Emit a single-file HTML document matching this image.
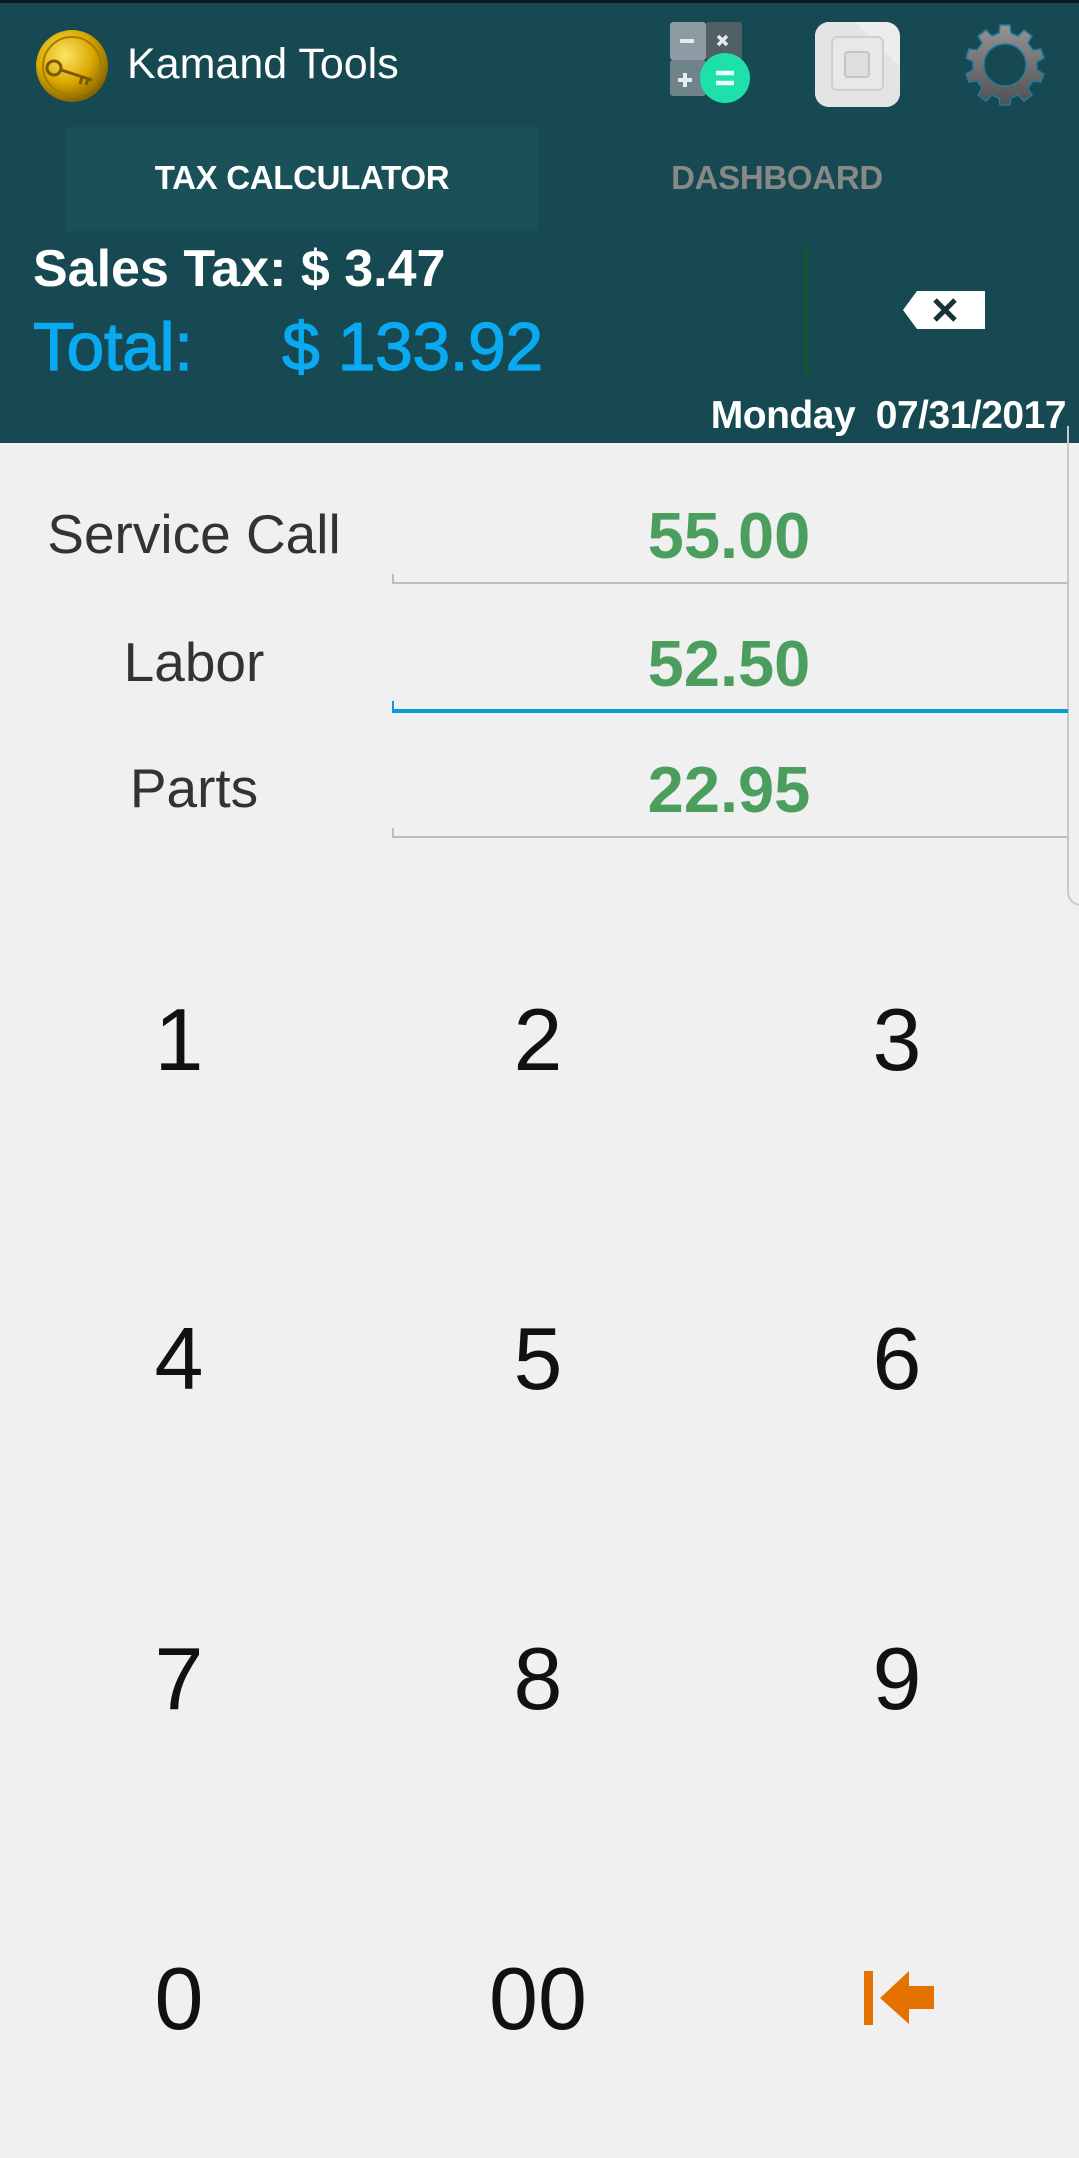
<!DOCTYPE html>
<html><head><meta charset="utf-8"><style>
*{margin:0;padding:0;box-sizing:border-box}
body{width:1079px;height:2158px;background:#f0f0f0;font-family:"Liberation Sans",sans-serif;position:relative;overflow:hidden}
.a{position:absolute;white-space:nowrap}
#hdr{position:absolute;left:0;top:0;width:1079px;height:443px;background:#164951;border-top:3px solid #0a1a1e}
.lab{font-size:55px;color:#333;transform:translateX(-50%)}
.val{font-size:65px;color:#4c9e5f;font-weight:bold;transform:translateX(-50%)}
.k{font-size:88px;color:#111;transform:translate(-50%,-50%)}
.ln{position:absolute;left:392px;width:676px;height:2px;background:#bdbdbd}
.tk{position:absolute;left:392px;width:2px;height:10px;background:#bdbdbd}
</style></head><body>
<div id="hdr"></div>
<svg class="a" style="left:34px;top:28px" width="76" height="76" viewBox="0 0 76 76">
<defs><radialGradient id="g" cx="40%" cy="35%" r="65%"><stop offset="0" stop-color="#ffe566"/><stop offset=".6" stop-color="#d9a800"/><stop offset="1" stop-color="#8a6500"/></radialGradient></defs>
<circle cx="38" cy="38" r="36" fill="url(#g)"/><circle cx="38" cy="38" r="29" fill="none" stroke="#a57c00" stroke-width="2"/>
<circle cx="20" cy="40" r="7" fill="none" stroke="#7a5a00" stroke-width="3"/><path d="M27 42 L58 52 M48 49 l-2 7 M54 51 l-2 6" stroke="#7a5a00" stroke-width="3" fill="none"/>
</svg>
<div class="a" style="left:127px;top:40px;font-size:43px;color:#fff">Kamand Tools</div>
<svg class="a" style="left:668px;top:20px" width="86" height="90" viewBox="0 0 86 90">
<rect x="2" y="2" width="36" height="38" rx="3" fill="#8c9ca2"/><rect x="38" y="2" width="36" height="38" rx="3" fill="#4f6167"/><rect x="2" y="40" width="36" height="36" rx="3" fill="#71838a"/>
<path d="M12 21h14" stroke="#e6eaeb" stroke-width="4"/><path d="M50 16l9 9M59 16l-9 9" stroke="#e6eaeb" stroke-width="3.5"/><path d="M10 60h14M17 53v14" stroke="#e6eaeb" stroke-width="4"/>
<circle cx="57" cy="58" r="25" fill="#1fe0ab"/><path d="M48 53h18M48 63h18" stroke="#eafff7" stroke-width="4.5"/>
</svg>
<svg class="a" style="left:815px;top:22px" width="85" height="85" viewBox="0 0 85 85">
<rect x="0" y="0" width="85" height="85" rx="14" fill="#ededed"/><path d="M0 14 A14 14 0 0 1 14 0 L40 0 L85 45 L85 71 A14 14 0 0 1 71 85 L14 85 A14 14 0 0 1 0 71Z" fill="#e4e4e4"/>
<rect x="17" y="15" width="51" height="53" rx="5" fill="#e8e8e8" stroke="#cfcfcf" stroke-width="2"/><rect x="30" y="30" width="24" height="25" rx="3" fill="#dedede" stroke="#c4c4c4" stroke-width="2"/>
</svg>
<svg class="a" style="left:963px;top:23px" width="84" height="84" viewBox="-42 -42 84 84">
<defs><linearGradient id="gg" x1="0" y1="0" x2="0" y2="1"><stop offset="0" stop-color="#959595"/><stop offset="1" stop-color="#505050"/></linearGradient></defs>
<g fill="url(#gg)" stroke="#1f7aa0" stroke-width="1.5">
<path d="M-5 -40 L5 -40 L6 -32 L13 -29 L19 -35 L27 -29 L23 -22 L28 -15 L36 -16 L39 -7 L32 -3 L32 5 L39 9 L36 17 L28 16 L23 23 L27 30 L19 36 L13 30 L6 33 L5 40 L-5 40 L-6 33 L-13 30 L-19 36 L-27 30 L-23 23 L-28 16 L-36 17 L-39 9 L-32 5 L-32 -3 L-39 -7 L-36 -16 L-28 -15 L-23 -22 L-27 -29 L-19 -35 L-13 -29 L-6 -32Z"/></g>
<circle r="21" fill="#164951" stroke="#1f7aa0" stroke-width="1.5"/>
</svg>
<div class="a" style="left:66px;top:127px;width:472px;height:104px;background:#1a5058"></div>
<div class="a" style="left:66px;top:159px;width:472px;text-align:center;font-size:33px;font-weight:bold;color:#fff;letter-spacing:-0.3px">TAX CALCULATOR</div>
<div class="a" style="left:600px;top:159px;width:354px;text-align:center;font-size:33px;font-weight:bold;color:#888;letter-spacing:-0.3px">DASHBOARD</div>
<div class="a" style="left:33px;top:239px;font-size:52px;font-weight:bold;color:#fff;letter-spacing:0px">Sales Tax: $ 3.47</div>
<div class="a" style="left:33px;top:308px;font-size:68px;color:#0aaaf2;letter-spacing:-0.5px;-webkit-text-stroke:1.2px #0aaaf2">Total:</div>
<div class="a" style="left:282px;top:308px;font-size:68px;color:#0aaaf2;letter-spacing:-0.5px;-webkit-text-stroke:1.2px #0aaaf2">$ 133.92</div>
<div class="a" style="left:805px;top:245px;width:3px;height:133px;background:#0f5a2c"></div>
<svg class="a" style="left:903px;top:291px" width="84" height="38" viewBox="0 0 84 38"><path d="M14 0 H82 V38 H14 L0 19Z" fill="#fff"/><path d="M32 9l20 20M52 9L32 29" stroke="#17333a" stroke-width="5"/></svg>
<div class="a" style="right:13px;top:394px;font-size:39px;font-weight:bold;color:#fff;letter-spacing:-0.5px">Monday&nbsp; 07/31/2017</div>
<div class="a" style="left:1067px;top:426px;width:14px;height:480px;border-left:2px solid #c8c8c8;border-bottom:2px solid #c8c8c8;border-radius:0 0 0 14px"></div>
<div class="a lab" style="left:194px;top:502px">Service Call</div>
<div class="a lab" style="left:194px;top:630px">Labor</div>
<div class="a lab" style="left:194px;top:756px">Parts</div>
<div class="a val" style="left:729px;top:498px">55.00</div>
<div class="a val" style="left:729px;top:626px">52.50</div>
<div class="a val" style="left:729px;top:752px">22.95</div>
<div class="ln" style="top:582px"></div><div class="tk" style="top:574px"></div>
<div class="ln" style="top:709px;height:4px;background:#0a9bd6"></div><div class="tk" style="top:701px;background:#0a9bd6"></div>
<div class="ln" style="top:836px"></div><div class="tk" style="top:828px"></div>
<div class="a k" style="left:179px;top:1040px">1</div><div class="a k" style="left:538px;top:1040px">2</div><div class="a k" style="left:897px;top:1040px">3</div>
<div class="a k" style="left:179px;top:1359px">4</div><div class="a k" style="left:538px;top:1359px">5</div><div class="a k" style="left:897px;top:1359px">6</div>
<div class="a k" style="left:179px;top:1679px">7</div><div class="a k" style="left:538px;top:1679px">8</div><div class="a k" style="left:897px;top:1679px">9</div>
<div class="a k" style="left:179px;top:1999px">0</div><div class="a k" style="left:538px;top:1999px">00</div>
<svg class="a" style="left:864px;top:1971px" width="72" height="56" viewBox="0 0 72 56"><rect x="0" y="0" width="9" height="54" fill="#e57200"/><path d="M16 27 L45 0 V15 H70 V38 H45 V53Z" fill="#e57200"/></svg>
</body></html>
